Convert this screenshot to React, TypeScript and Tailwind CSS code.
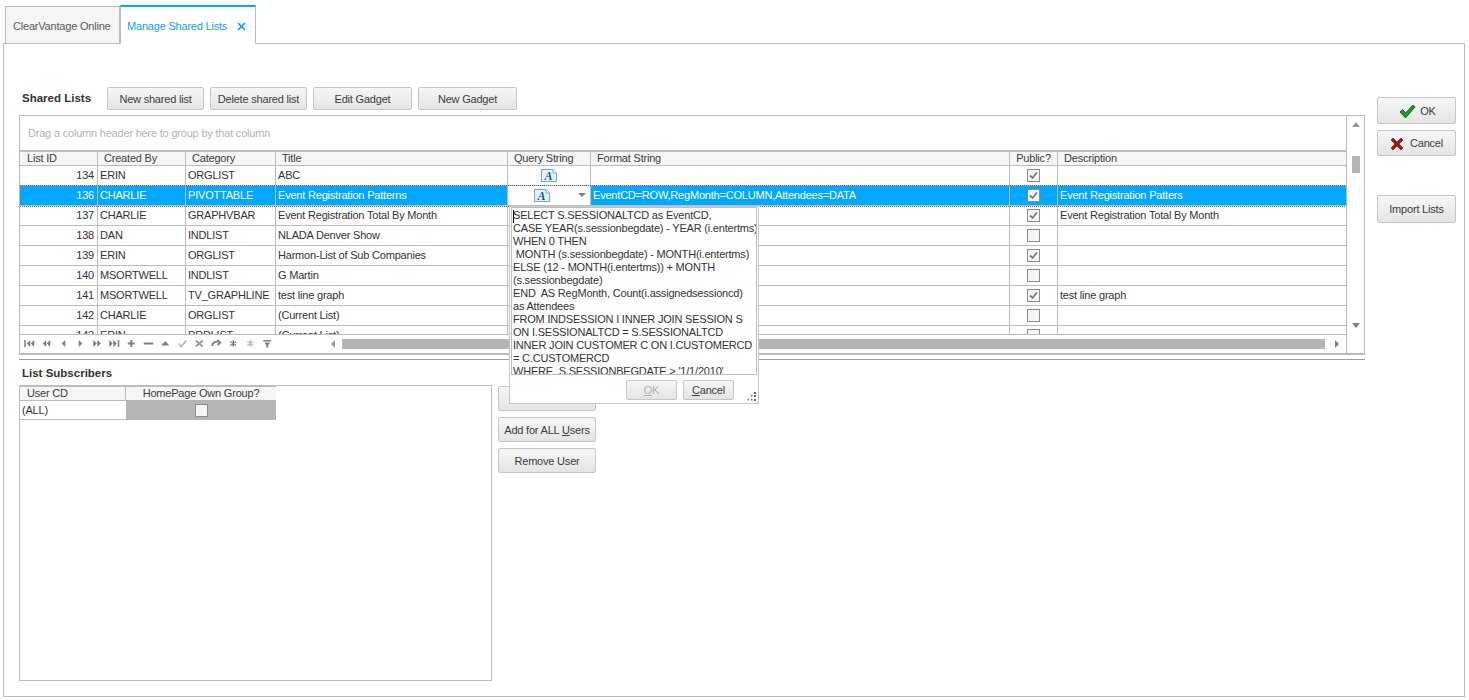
import React from "react";

const COLS = "grid grid-cols-[78px_88px_90px_232px_83px_419px_48px_288px]";
const F = "font-['Liberation_Sans',Arial,sans-serif]";

type Row = { id: number; by: string; cat: string; title: string; q?: boolean; fmt?: string; pub: boolean; desc?: string; sel?: boolean };
const rows: Row[] = [
  { id: 134, by: "ERIN", cat: "ORGLIST", title: "ABC", q: true, pub: true },
  { id: 136, by: "CHARLIE", cat: "PIVOTTABLE", title: "Event Registration Patterns", q: true, fmt: "EventCD=ROW,RegMonth=COLUMN,Attendees=DATA", pub: true, desc: "Event Registration Patters", sel: true },
  { id: 137, by: "CHARLIE", cat: "GRAPHVBAR", title: "Event Registration Total By Month", pub: true, desc: "Event Registration Total By Month" },
  { id: 138, by: "DAN", cat: "INDLIST", title: "NLADA Denver Show", pub: false },
  { id: 139, by: "ERIN", cat: "ORGLIST", title: "Harmon-List of Sub Companies", pub: true },
  { id: 140, by: "MSORTWELL", cat: "INDLIST", title: "G Martin", pub: false },
  { id: 141, by: "MSORTWELL", cat: "TV_GRAPHLINE", title: "test line graph", pub: true, desc: "test line graph" },
  { id: 142, by: "CHARLIE", cat: "ORGLIST", title: "(Current List)", pub: false },
  { id: 143, by: "ERIN", cat: "PRDLIST", title: "(Current List)", pub: false },
];

const sql = [
  "SELECT S.SESSIONALTCD as EventCD,",
  "CASE YEAR(s.sessionbegdate) - YEAR (i.entertms)",
  "WHEN 0 THEN",
  " MONTH (s.sessionbegdate) - MONTH(i.entertms)",
  "ELSE (12 - MONTH(i.entertms)) + MONTH",
  "(s.sessionbegdate)",
  "END  AS RegMonth, Count(i.assignedsessioncd)",
  "as Attendees",
  "FROM INDSESSION I INNER JOIN SESSION S",
  "ON I.SESSIONALTCD = S.SESSIONALTCD",
  "INNER JOIN CUSTOMER C ON I.CUSTOMERCD",
  "= C.CUSTOMERCD",
  "WHERE  S.SESSIONBEGDATE > '1/1/2010'",
];

function Btn({ className = "", children, disabled }: { className?: string; children: React.ReactNode; disabled?: boolean }) {
  return (
    <div className={`flex items-center justify-center pt-px rounded-[2px] border border-[#c6c6c6] bg-gradient-to-b from-[#f6f6f6] to-[#e4e4e4] ${disabled ? "text-[#b0b0b0]" : "text-[#3c3c3c]"} ${className}`}>
      {children}
    </div>
  );
}

function Check({ on, bg = "bg-[#f5f5f5]" }: { on: boolean; bg?: string }) {
  return (
    <div className={`w-[13px] h-[13px] border border-[#8c8c8c] ${bg} flex items-center justify-center`}>
      {on && (
        <svg width="11" height="11" viewBox="0 0 11 11">
          <path d="M2 5.5 L4.5 8 L9 2.5" fill="none" stroke="#7a7a7a" strokeWidth="1.8" />
        </svg>
      )}
    </div>
  );
}

function DocA() {
  return (
    <svg width="16" height="13" viewBox="0 0 16 13">
      <path d="M0.5 0.5 H12 L15.5 4 V12.5 H0.5 Z" fill="#e6f2fc" stroke="#6aa9e0" />
      <path d="M12 0.5 V4 H15.5" fill="#ffffff" stroke="#6aa9e0" />
      <text x="7.5" y="11" textAnchor="middle" fontSize="12" fontWeight="700" fontStyle="italic" fontFamily="'Liberation Serif',serif" fill="#1a559c">A</text>
    </svg>
  );
}

const navIcons: React.ReactNode[] = [
  <path d="M0 1H1.500V8H0ZM6 1L2.500 4.500L6 8ZM10 1L6.500 4.500L10 8Z" />,
  <path d="M5 1L1.500 4.500L5 8ZM9 1L5.500 4.500L9 8Z" />,
  <path d="M7 1L3.500 4.500L7 8Z" />,
  <path d="M3.500 1L7 4.500L3.500 8Z" />,
  <path d="M1 1L4.500 4.500L1 8ZM5 1L8.500 4.500L5 8Z" />,
  <path d="M0 1L3.500 4.500L0 8ZM4 1L7.500 4.500L4 8ZM8.500 1H10V8H8.500Z" />,
  <path d="M4 1H6V3.500H8.500V5.500H6V8H4V5.500H1.500V3.500H4Z" />,
  <path d="M0.500 3.500H10V5.500H0.500Z" />,
  <path d="M5 2L9 6.500H1Z" />,
  <path d="M1.500 4.500L4 7.500L9 1.500" fill="none" stroke="#b9b9b9" strokeWidth="1.8" />,
  <path d="M1.500 1.500L8.500 7.500M8.500 1.500L1.500 7.500" fill="none" stroke="#9a9a9a" strokeWidth="1.8" />,
  <path d="M1 7C1 3 5 2 8 3M6 1L9 3.500L6.500 6" fill="none" stroke="#7f7f7f" strokeWidth="1.8" />,
  <path d="M5 1V8M2 2.500L8 6.500M8 2.500L2 6.500" fill="none" stroke="#7f7f7f" strokeWidth="1.2" />,
  <path d="M5 1V8M2 2.500L8 6.500M8 2.500L2 6.500" fill="none" stroke="#b9b9b9" strokeWidth="1.2" />,
  <path d="M1 1H9V2.500H1ZM2 3.500H8L6 6V8.500H4V6Z" />,
];

function Cell({ className = "", children, sel }: { className?: string; children?: React.ReactNode; sel?: boolean }) {
  return (
    <div className={`h-full border-r border-[#bcbcbc] flex items-center overflow-hidden whitespace-nowrap px-[2px] ${sel ? "text-white" : ""} ${className}`}>
      {children}
    </div>
  );
}

function SharedGrid() {
  return (
    <div className="relative w-[1346px] h-[240px] border-x border-b-2 border-t border-[#bcbcbc] flex">
      <div className="w-[1327px] flex flex-col border-r border-[#bcbcbc]">
        <div className="h-[36px] shrink-0 pl-[8px] pt-px flex items-center text-[#b4b4b4] border-b-2 border-[#bcbcbc]">
          Drag a column header here to group by that column
        </div>
        <div className={`${COLS} h-[14px] shrink-0 bg-[#f5f5f5] border-b border-[#bcbcbc] text-[#3c3c3c]`}>
          {["List ID", "Created By", "Category", "Title", "Query String", "Format String", "Public?", "Description"].map((h, i) => (
            <div key={h} className={`border-r border-[#bcbcbc] flex items-center overflow-hidden whitespace-nowrap ${i === 6 ? "justify-center" : i === 0 ? "pl-[7px]" : "pl-[6px]"} ${i === 7 ? "border-r-0" : ""}`}>
              {h}
            </div>
          ))}
        </div>
        <div className="h-[169px] shrink-0 overflow-hidden">
          {rows.map((r) => (
            <div key={r.id} className={`${COLS} h-[20px] border-b border-[#bcbcbc] ${r.sel ? "bg-[#00a9ff] outline outline-dotted outline-[#6a6a6a]" : ""}`}>
              <Cell sel={r.sel} className="justify-end pr-[3px]">{r.id}</Cell>
              <Cell sel={r.sel}>{r.by}</Cell>
              <Cell sel={r.sel}>{r.cat}</Cell>
              <Cell sel={r.sel}>{r.title}</Cell>
              <Cell className={`relative justify-center ${r.sel ? "bg-white pr-[16px]" : ""}`}>
                {r.q && <DocA />}
                {r.sel && (
                  <svg className="absolute right-[4px] top-[7px]" width="8" height="5" viewBox="0 0 8 5"><path d="M0 0H8L4 4Z" fill="#808080" /></svg>
                )}
              </Cell>
              <Cell sel={r.sel}>{r.fmt}</Cell>
              <Cell className="justify-center"><Check on={r.pub} /></Cell>
              <Cell sel={r.sel} className="border-r-0">{r.desc}</Cell>
            </div>
          ))}
        </div>
        <div className="h-[18px] shrink-0 border-t border-[#bcbcbc] bg-white flex items-center pl-[4px] -mt-px">
          <div className="flex gap-[6.5px] w-[301px]">
            {navIcons.map((n, i) => (
              <svg key={i} width="10.5" height="9" viewBox="0 0 10 9" fill="#7f7f7f">{n}</svg>
            ))}
          </div>
          <svg width="5" height="8" viewBox="0 0 5 8" className="ml-[6px]"><path d="M4 0V8L0 4Z" fill="#9a9a9a" /></svg>
          <div className="ml-[6px] w-[983px] h-[10px] bg-[#b5b5b5]" />
          <svg width="5" height="8" viewBox="0 0 5 8" className="ml-[10px]"><path d="M0 0V8L4 4Z" fill="#808080" /></svg>
        </div>
      </div>
      <div className="w-[17px] h-[218px] flex flex-col items-center pt-[6px] pb-[6px]">
        <svg width="8" height="5" viewBox="0 0 8 5"><path d="M0 5H8L4 0Z" fill="#9a9a9a" /></svg>
        <div className="mt-[29px] w-[8px] h-[17px] bg-[#b5b5b5]" />
        <svg width="8" height="5" viewBox="0 0 8 5" className="mt-auto"><path d="M0 0H8L4 5Z" fill="#808080" /></svg>
      </div>

      <div className="absolute left-[489px] top-[90px] w-[250px] h-[198px] bg-white border border-[#c8c8c8] flex flex-col">
        <div className="mx-[1px] h-[168px] shrink-0 border border-[#bcbcbc] overflow-hidden pl-[1px] pt-[1px] text-[#333] leading-[13px] whitespace-pre relative">
          <div className="absolute left-[1px] top-[2px] w-px h-[13px] bg-black" />
          {sql.map((l) => <div key={l}>{l}</div>)}
        </div>
        <div className="flex-1 relative">
          <Btn disabled className="absolute left-[116px] top-[5px] w-[51px] h-[20px]"><span><span className="underline">O</span>K</span></Btn>
          <Btn className="absolute left-[173px] top-[5px] w-[51px] h-[20px]"><span><span className="underline">C</span>ancel</span></Btn>
          <svg className="absolute right-[1px] bottom-[1px]" width="12" height="11" viewBox="0 0 12 11" fill="#666">
            <path d="M9 1h2v2H9zM6 4h1.500v1.500H6zM9 4h2v2H9zM2.500 8h1.500v1.500H2.500zM6 8h1.500v1.500H6zM9 8h2v2H9z" />
          </svg>
        </div>
      </div>
    </div>
  );
}

export default function App() {
  return (
    <div className={`${F} w-[1469px] h-[700px] bg-white text-[11px] tracking-[-0.2px] text-[#333] flex flex-col overflow-hidden`}>
      <div className="h-[44px] flex items-end pl-[5px] relative z-10 shrink-0">
        <div className="w-[115px] h-[37px] mb-px border border-b-0 border-[#bcbcbc] bg-[#f5f5f5] flex items-center pl-[7px] pt-[3px] text-[#5a5a5a]">ClearVantage Online</div>
        <div className="w-[136px] h-[39px] border-x border-[#bcbcbc] border-t-2 border-t-[#00a9ff] bg-white flex items-center pl-[6px] pt-[2px] text-[#109fe8]">
          <span>Manage Shared Lists</span>
          <svg className="ml-[10px]" width="9" height="9" viewBox="0 0 9 9"><path d="M1 1L8 8M8 1L1 8" stroke="#109fe8" strokeWidth="1.6" /></svg>
        </div>
      </div>
      <div className="mx-[3px] w-[1462px] h-[654px] -mt-px border border-[#bcbcbc] flex pl-[15px] shrink-0">
        <div className="w-[1346px] flex flex-col pt-[43px]">
          <div className="h-[23px] flex items-center">
            <b className="w-[88px] text-[11.5px] tracking-normal font-bold pl-[3px]">Shared Lists</b>
            <Btn className="w-[97px] h-[23px]">New shared list</Btn>
            <Btn className="w-[97px] h-[23px] ml-[6px]">Delete shared list</Btn>
            <Btn className="w-[99px] h-[23px] ml-[6px]">Edit Gadget</Btn>
            <Btn className="w-[99px] h-[23px] ml-[6px]">New Gadget</Btn>
          </div>
          <div className="mt-[5px] z-10"><SharedGrid /></div>
          <div className="mt-[4px] h-px bg-[#a0a0a0]" />
          <b className="mt-[6px] h-[14px] leading-[14px] pl-[3px] text-[11.5px] tracking-normal font-bold">List Subscribers</b>
          <div className="mt-[5px] flex">
            <div className="w-[473px] h-[296px] border border-[#bcbcbc]">
              <div className="w-[256px]">
                <div className="grid grid-cols-[106px_150px] h-[14px] bg-[#f5f5f5] border-t border-[#bcbcbc] text-[#3c3c3c]">
                  <div className="pl-[7px] border-r border-[#bcbcbc] leading-[13px]">User CD</div>
                  <div className="text-center leading-[13px]">HomePage Own Group?</div>
                </div>
                <div className="grid grid-cols-[106px_150px] h-[20px]">
                  <div className="pl-[2px] flex items-center border-y border-[#bcbcbc]">(ALL)</div>
                  <div className="bg-[#b5b5b5] flex items-center justify-center"><Check on={false} /></div>
                </div>
              </div>
            </div>
            <div className="ml-[6px] mt-px flex flex-col gap-[6px] w-[98px]">
              <Btn className="h-[25px]">Add User</Btn>
              <Btn className="h-[25px]"><span>Add for ALL <span className="underline">U</span>sers</span></Btn>
              <Btn className="h-[25px]">Remove User</Btn>
            </div>
          </div>
        </div>
        <div className="ml-[12px] w-[79px] flex flex-col pt-[53px]">
          <Btn className="h-[27px] gap-[4px] pl-[2px]">
            <svg width="17" height="15" viewBox="0 0 17 15"><path d="M1 8L3.500 5.500L6.500 9L14 1L16 3L6.500 14Z" fill="#1d9a2b" stroke="#0d4a18" strokeWidth="0.8" /></svg>
            <span>OK</span>
          </Btn>
          <Btn className="h-[26px] mt-[6px] gap-[6px]">
            <svg width="14" height="14" viewBox="0 0 14 14"><path d="M1 3L3 1L7 5L11 1L13 3L9 7L13 11L11 13L7 9L3 13L1 11L5 7Z" fill="#a01414" stroke="#5a0a0a" strokeWidth="0.6" /></svg>
            <span>Cancel</span>
          </Btn>
          <Btn className="h-[28px] mt-[39px]">Import Lists</Btn>
        </div>
      </div>
    </div>
  );
}
